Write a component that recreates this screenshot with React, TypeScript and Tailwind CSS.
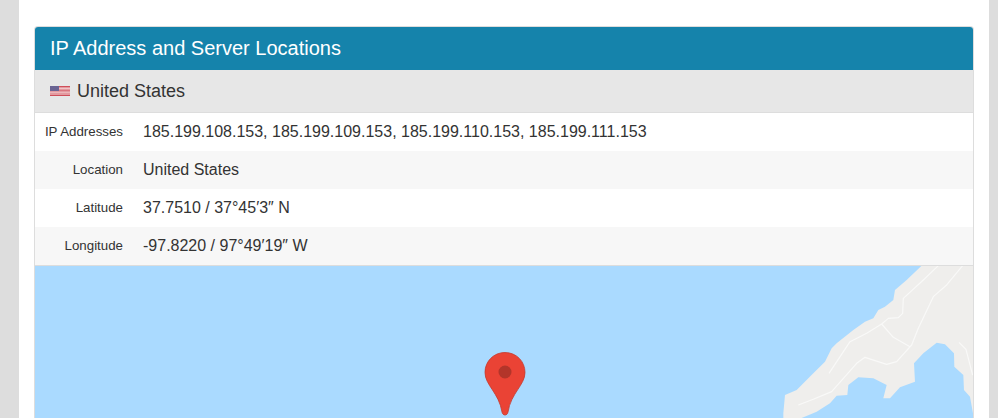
const ROWS = [
  { label: "IP Addresses", value: "185.199.108.153, 185.199.109.153, 185.199.110.153, 185.199.111.153" },
  { label: "Location", value: "United States" },
  { label: "Latitude", value: "37.7510 / 37°45′3″ N" },
  { label: "Longitude", value: "-97.8220 / 97°49′19″ W" },
];

function UsFlag() {
  return (
    <svg width="20" height="10" viewBox="0 0 20 10" className="block">
      <rect width="20" height="10" fill="#e39aa0" />
      <rect width="20" height="1" fill="#cf4f5a" />
      <rect y="2" width="20" height="1" fill="#f0c4c7" />
      <rect y="4" width="20" height="1" fill="#d9757e" />
      <rect y="6" width="20" height="1" fill="#ecb6ba" />
      <rect y="9" width="20" height="1" fill="#cf4f5a" />
      <rect width="9" height="5" fill="#6a6493" />
    </svg>
  );
}

function MapView() {
  return (
    <svg viewBox="0 0 938 152" className="block h-[152px] w-[938px]">
      <rect width="938" height="152" fill="#aadaff" />
      <g transform="translate(725 -16) scale(0.3333)">
        <path
          d="M485 47 L440 90 L405 120 L400 150 L375 170 L355 180 L340 205 L315 215 L280 240 L230 280 L215 295 L195 335 L160 370 L110 420 L75 435 L70 490 L70 504 L125 504 L170 485 L210 460 L230 437 L262 435 L265 405 L295 382 L340 385 L380 405 L370 445 L390 445 L420 412 L465 395 L462 340 L490 310 L530 278 L555 283 L582 310 L583 350 L610 375 L612 420 L630 440 L640 495 L640 47 Z"
          fill="#efeeec"
        />
        <g fill="none" stroke="#f9f9f8" strokeWidth="3.500" strokeLinejoin="round">
          <path d="M535 47 L490 90 L430 145 L428 190 L415 203 L385 205 L365 222 L320 250 L270 275 L207 370" />
          <path d="M365 222 L400 262 L450 290" />
          <path d="M608 47 L560 105 L520 140 L475 235 L455 285 L410 335 L380 343 L315 322 L290 340 L215 425 L160 448 L115 465" />
          <path d="M597 277 L618 298 L638 375" />
        </g>
      </g>
      <path
        d="M470 86.500 C458.500 86.500 450 95.500 450 106.500 C450 119 464 127 467 146 C467.500 150 472.500 150 473 146 C476 127 490 119 490 106.500 C490 95.500 481.500 86.500 470 86.500 Z"
        fill="#ea4335"
        stroke="#c5392c"
        strokeWidth="0.800"
      />
      <circle cx="470" cy="106" r="6.500" fill="#b3352a" />
    </svg>
  );
}

export default function App() {
  return (
    <div className="h-[418px] overflow-hidden bg-[#dddddd] pl-[19px] pr-[9px] font-['Liberation_Sans',Arial,sans-serif] text-[#333333]">
      <div className="h-full bg-white px-[15px] pt-[26px]">
        <div className="overflow-hidden rounded-t-[4px] border-x border-t border-[#dddddd]">
          <h2 className="flex h-[43px] items-center bg-[#1583ab] px-[15px] pb-[2px] text-[20px] text-white">
            IP Address and Server Locations
          </h2>
          <div className="flex h-[43px] items-center gap-[7px] border-b border-[#dddddd] bg-[#e7e7e7] px-[15px] text-[18px]">
            <UsFlag />
            <span>United States</span>
          </div>
          <div className="border-b border-[#dddddd]">
            {ROWS.map((row) => (
              <div key={row.label} className="flex h-[38px] items-center odd:bg-white even:bg-[#f7f7f7]">
                <div className="w-[88px] text-right text-[13.3px]">{row.label}</div>
                <div className="ml-[20px] text-[16px]">{row.value}</div>
              </div>
            ))}
          </div>
          <MapView />
        </div>
      </div>
    </div>
  );
}
